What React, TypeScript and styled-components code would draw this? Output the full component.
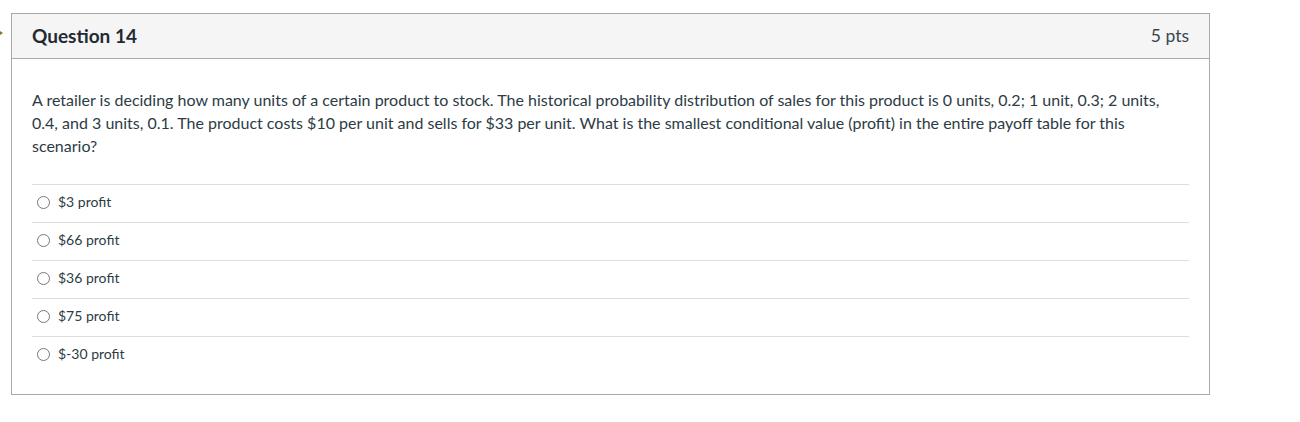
import styled, { createGlobalStyle } from "styled-components";

const GlobalStyle = createGlobalStyle`
  html, body {
    margin: 0;
    padding: 0;
    background: #fff;
  }
  body {
    font-family: Lato, "Open Sans", "Liberation Sans", sans-serif;
    color: #2d3b45;
  }
`;

const Page = styled.div`
  padding: 13px 0 0 11px;
  position: relative;
`;

const Marker = styled.span`
  position: absolute;
  left: -3px;
  top: 29px;
  width: 0;
  height: 0;
  border-top: 4px solid transparent;
  border-bottom: 4px solid transparent;
  border-left: 6px solid #8a6d3b;
`;

const Card = styled.div`
  width: 1197px;
  border: 1px solid #a9a9a9;
  background: #fff;
`;

const Header = styled.div`
  display: flex;
  align-items: center;
  justify-content: space-between;
  height: 42px;
  padding: 0 20px 2px;
  background: #f5f5f5;
  border-bottom: 1px solid #aaa;
`;

const Title = styled.h2`
  margin: 0;
  font-size: 19px;
  font-weight: 700;
  color: #1f2a33;
`;

const Points = styled.span`
  font-size: 17.5px;
  color: #3a4650;
`;

const Body = styled.div`
  padding: 29px 20px 20px;
`;

const Prompt = styled.p`
  margin: 0 0 27px;
  font-size: 16px;
  line-height: 23px;
`;

const Options = styled.div`
  display: flex;
  flex-direction: column;
`;

const Option = styled.label`
  display: flex;
  align-items: center;
  gap: 8px;
  height: 32px;
  padding: 0 0 5px 5px;
  border-top: 1px solid #ddd;
  font-size: 14px;
  cursor: pointer;
`;

const Radio = styled.span`
  width: 11px;
  height: 11px;
  border: 1px solid #777;
  border-radius: 50%;
  background: #fff;
  flex-shrink: 0;
  margin-top: 3px;
`;

const answers = ["$3 profit", "$66 profit", "$36 profit", "$75 profit", "$-30 profit"];

export default function App() {
  return (
    <>
      <GlobalStyle />
      <Page>
        <Marker />
        <Card>
          <Header>
            <Title>Question 14</Title>
            <Points>5 pts</Points>
          </Header>
          <Body>
            <Prompt>
              A retailer is deciding how many units of a certain product to stock. The historical
              probability distribution of sales for this product is 0 units, 0.2; 1 unit, 0.3; 2
              units, 0.4, and 3 units, 0.1. The product costs $10 per unit and sells for $33 per
              unit. What is the smallest conditional value (profit) in the entire payoff table for
              this scenario?
            </Prompt>
            <Options>
              {answers.map((a) => (
                <Option key={a}>
                  <Radio />
                  {a}
                </Option>
              ))}
            </Options>
          </Body>
        </Card>
      </Page>
    </>
  );
}
